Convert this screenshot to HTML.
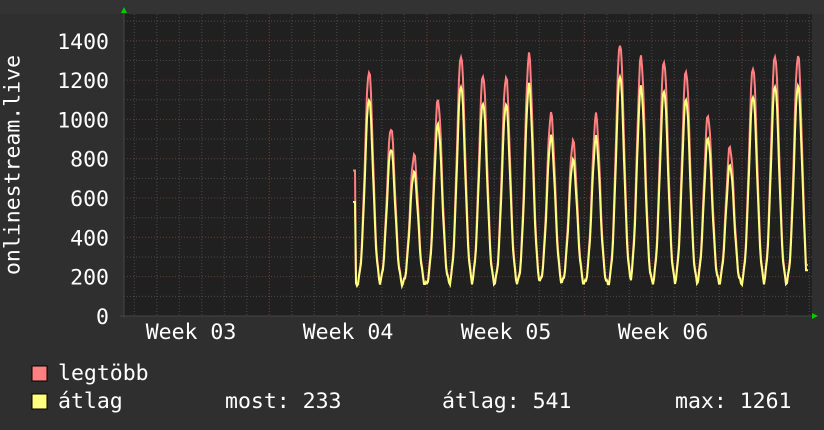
<!DOCTYPE html><html><head><style>
html,body{margin:0;padding:0;background:#2f2f2f;}
body{width:824px;height:430px;overflow:hidden;position:relative;font-family:"DejaVu Sans Mono","Liberation Mono",monospace;color:#fff}
.t{position:absolute;font-size:21.5px;line-height:1;white-space:pre}
</style></head><body>
<svg id="s" width="824" height="430" style="position:absolute;left:0;top:0">
<rect x="0" y="0" width="824" height="14" fill="#333"/>
<rect x="124" y="14" width="688" height="302" fill="#202020"/>
<g id="g"></g>
<polygon points="121,13 127,13 124,7" fill="#0c0"/>
<polygon points="812,313 812,319 818,316" fill="#0c0"/>
<rect x="32" y="366" width="15" height="15" fill="#ff8080" stroke="#000"/>
<rect x="32" y="394" width="15" height="15" fill="#ffff80" stroke="#000"/>
<text x="13" y="165" transform="rotate(-90 13 165)" text-anchor="middle" dominant-baseline="central" fill="#fff" font-family="DejaVu Sans Mono, monospace" font-size="21.5">onlinestream.live</text>
</svg>
<div class="t" style="left:58px;top:363px">legtöbb</div>
<div class="t" style="left:58px;top:391px">átlag</div>
<div class="t" style="left:225px;top:391px">most: 233</div>
<div class="t" style="left:442px;top:391px">átlag: 541</div>
<div class="t" style="left:675px;top:391px">max: 1261</div>
<script>
var g=document.getElementById('g'),h='';
var F='font-size="21.5" font-family="DejaVu Sans Mono,monospace" fill="#fff"';
function Y(v){return 316-v*0.1966;}
for(var v=100;v<=1500;v+=100){var y=Y(v);if(y<14)break;var maj=v%200==0;
h+='<line x1="124" x2="812" y1="'+y+'" y2="'+y+'" stroke="'+(maj?'#6a3a3a':'#4a4a4a')+'" stroke-dasharray="1,2"/>';
if(maj)h+='<text x="109" y="'+(y+8)+'" text-anchor="end" '+F+'>'+v+'</text>';}
h+='<text x="109" y="324" text-anchor="end" '+F+'>0</text>';
for(var x=134.3;x<812;x+=22.5){h+='<line x1="'+x+'" x2="'+x+'" y1="14" y2="316" stroke="#4a4a4a" stroke-dasharray="1,2"/>';}
[269.5,427,584.5,742].forEach(function(x){h+='<line x1="'+x+'" x2="'+x+'" y1="14" y2="316" stroke="#6a3a3a" stroke-dasharray="1,2"/>';});
h+='<line x1="120" x2="812" y1="316" y2="316" stroke="#444"/><line x1="124" x2="124" y1="14" y2="318" stroke="#444"/>';
[["Week 03",191],["Week 04",348],["Week 05",506],["Week 06",663]].forEach(function(w){h+='<text x="'+w[1]+'" y="339" text-anchor="middle" '+F+'>'+w[0]+'</text>';});
var pk=[[369,1250],[391,960],[414,820],[438,1100],[461,1330],[483,1230],[506,1220],[529,1330],[551,1030],[573,890],[596,1020],[620,1390],[641,1320],[664,1300],[686,1250],[708,1020],[730,860],[753,1270],[775,1330],[798,1330]];
function val(x){var best=150;for(var i=0;i<pk.length;i++){var d=Math.abs(x-pk[i][0]);var b=150+(pk[i][1]-150)*Math.exp(-d*d/32);if(b>best)best=b;}
return best+15*Math.sin(x*1.7);}
var r='',yl='';
for(var x=353;x<=808;x++){var v=val(x);if(x<356)v=740;var a=150+(v-150)*0.87;if(x<356)a=580;if(x>=806){a=233;v=260;}
r+=x+','+Y(v).toFixed(1)+' ';yl+=x+','+Y(a).toFixed(1)+' ';}
h+='<polyline points="'+r+'" fill="none" stroke="#ff8080" stroke-width="2"/>';
h+='<polyline points="'+yl+'" fill="none" stroke="#ffff80" stroke-width="2"/>';
g.innerHTML=h;
</script>
</body></html>
